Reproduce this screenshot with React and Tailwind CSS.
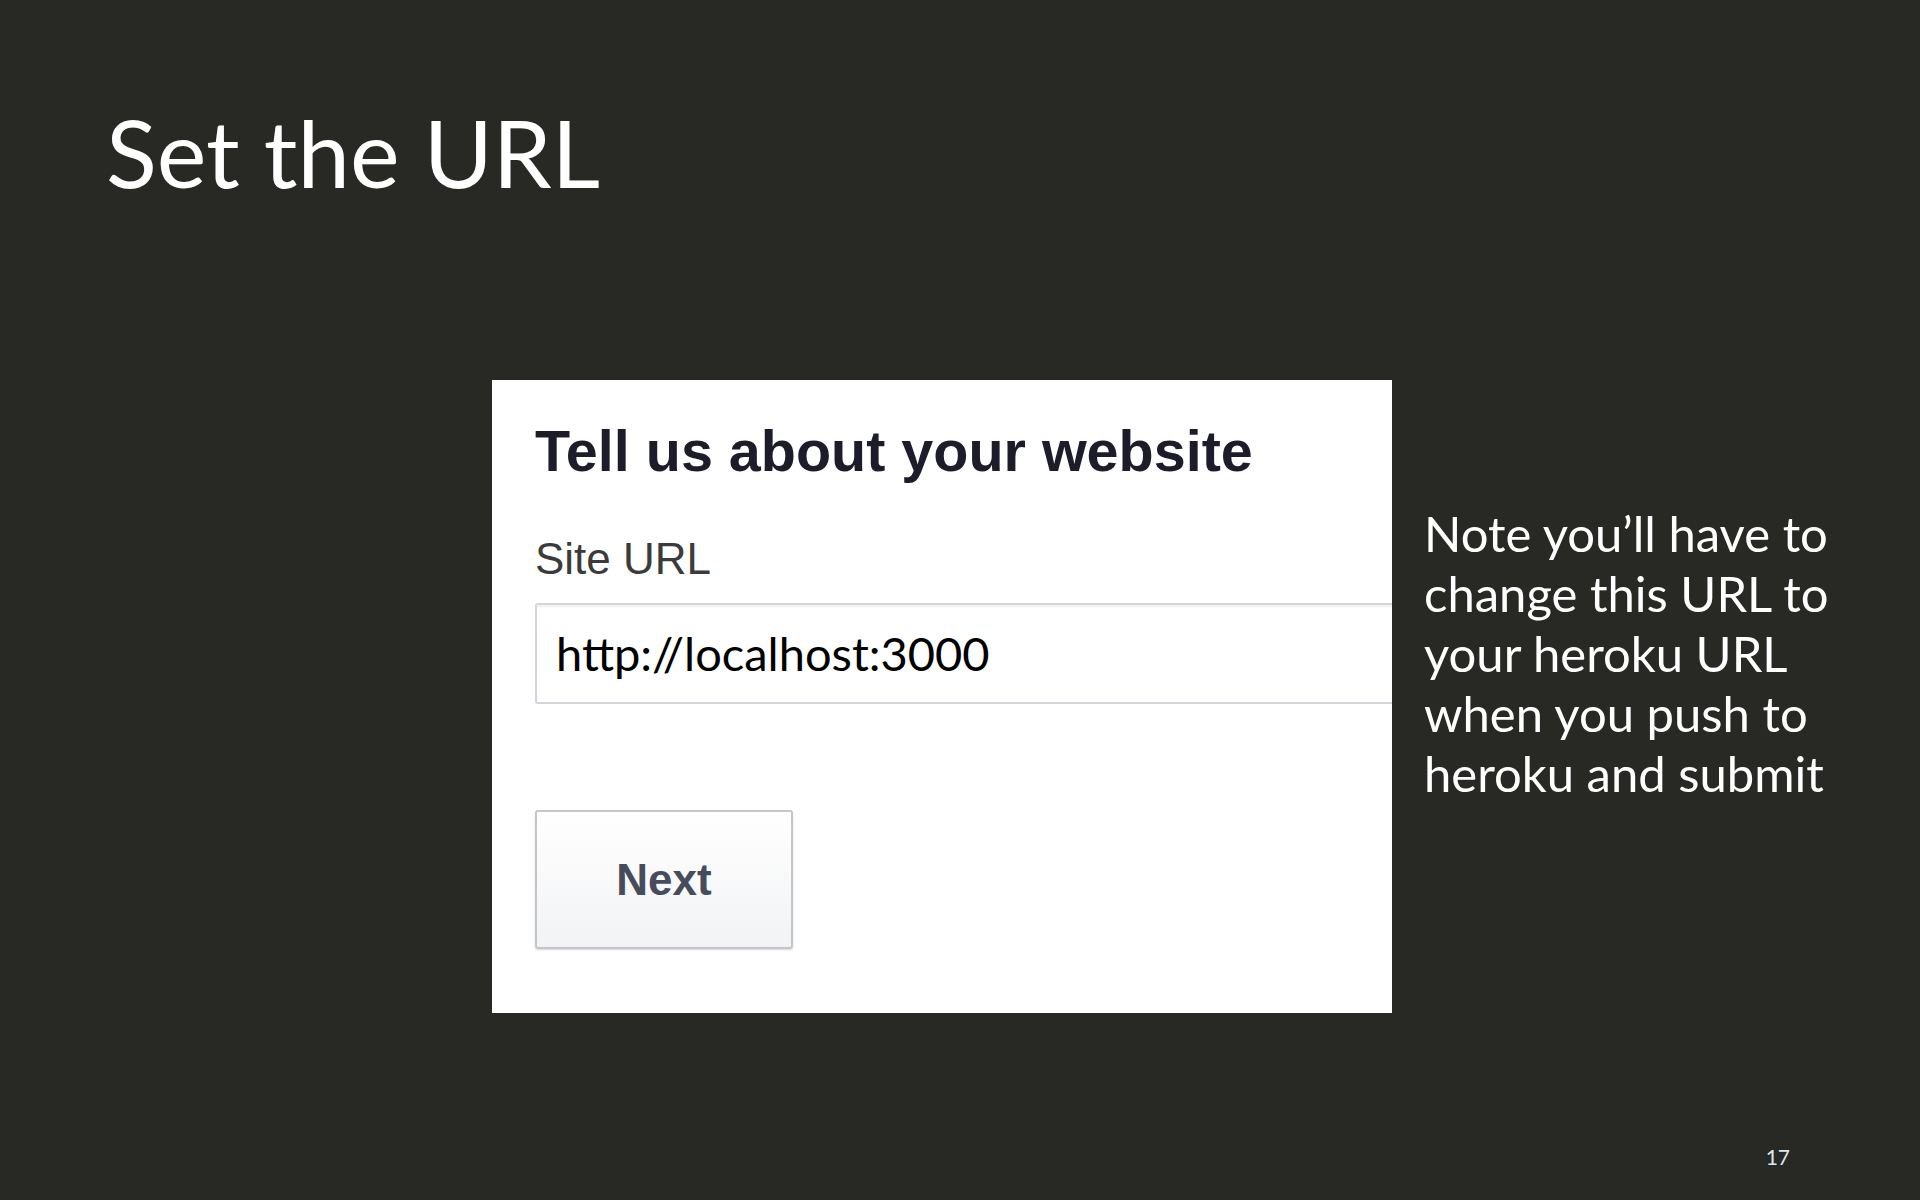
export default function App() {
  const gill = { fontFamily: "Lato, 'Open Sans', sans-serif" };

  return (
    <div
      className="w-full h-[1200px] bg-[#282824] text-white flex flex-col overflow-hidden"
      style={gill}
    >
      {/* title */}
      <h1 className="pl-[106px] pt-[97px] text-[94px] leading-[110px] font-normal">
        Set the URL
      </h1>

      {/* screenshot + note */}
      <div className="flex items-start pl-[492px] mt-[173px]">
        <div className="w-[900px] h-[633px] bg-white overflow-hidden pl-[43px] pt-[36px] shrink-0">
          <h2
            className="text-[57.5px] leading-[70px] font-bold text-[#1c1c2a]"
            style={{ fontFamily: "'Liberation Sans', Arial, sans-serif" }}
          >
            Tell us about your website
          </h2>
          <div
            className="mt-[48px] text-[44px] leading-[50px] text-[#3b3b3b]"
            style={{ fontFamily: "'Liberation Sans', Arial, sans-serif" }}
          >
            Site URL
          </div>
          <div className="mt-[19px] w-[900px] h-[101px] border-2 border-[#d3d5da] rounded-[3px] shadow-[inset_0_2px_2px_rgba(0,0,0,0.06)] pl-[19px] flex items-center">
            <span className="text-[47px] text-black">http://localhost:3000</span>
          </div>
          <button
            className="mt-[106px] w-[258px] h-[139px] border-2 border-[#c4c6ca] rounded-[3px] bg-gradient-to-b from-white to-[#f2f3f5] shadow-[0_1px_2px_rgba(0,0,0,0.15)] text-[44px] font-bold text-[#474c5c]"
            style={{ fontFamily: "'Liberation Sans', Arial, sans-serif" }}
          >
            Next
          </button>
        </div>

        <p className="ml-[32px] mt-[123px] text-[49px] leading-[60px] w-[470px]">
          Note you’ll have to change this URL to your heroku URL when you push
          to heroku and submit
        </p>
      </div>

      {/* page number */}
      <div className="mt-auto pb-[28px] pr-[130px] flex justify-end">
        <span className="text-[21px] text-[#dce8f2]">17</span>
      </div>
    </div>
  );
}
